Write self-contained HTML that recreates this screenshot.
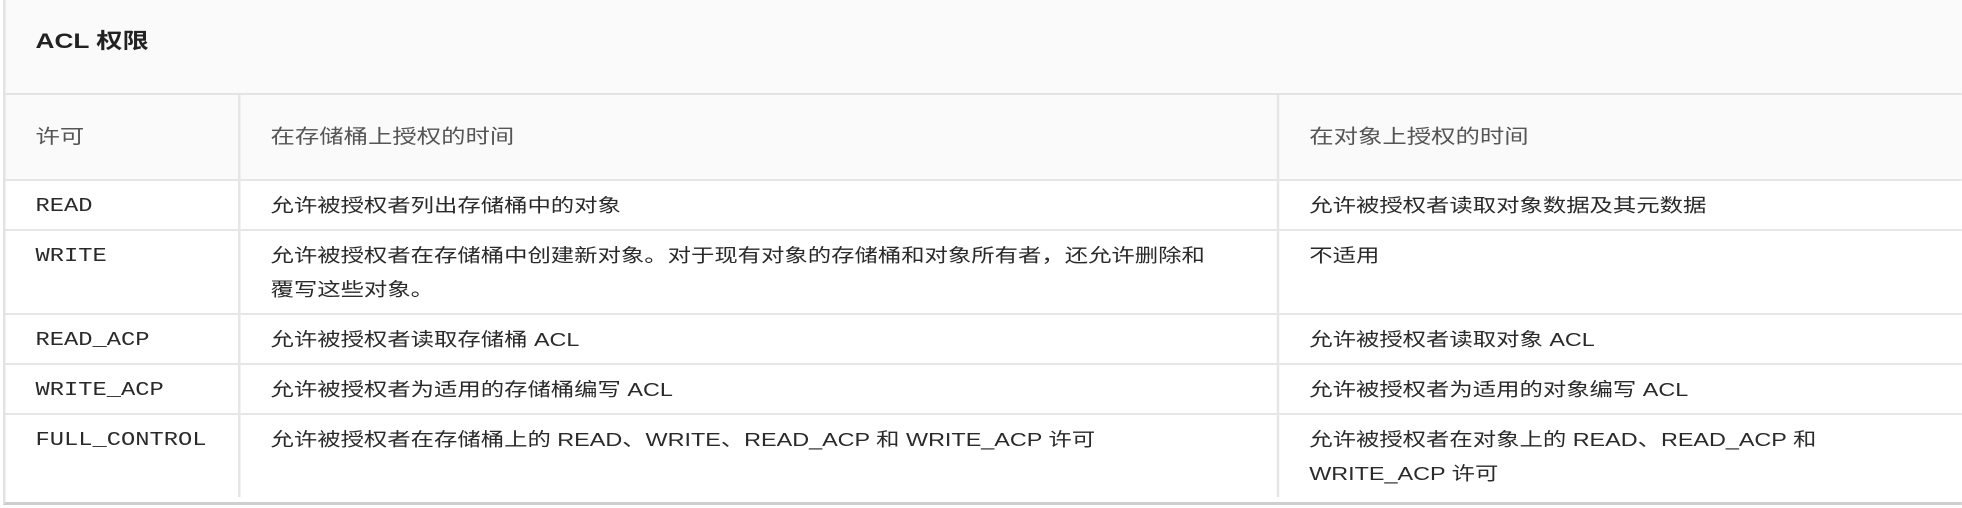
<!DOCTYPE html>
<html><head><meta charset="utf-8"><style>
body{margin:0;background:#fff;width:1962px;height:508px;overflow:hidden;font-family:"Liberation Sans","Noto Sans CJK SC",sans-serif;color:#333;}
.wrap{position:absolute;left:3px;top:0;width:1567px;height:505px;border-left:2px solid #e3e3e3;border-bottom:3px solid #cfcfcf;box-sizing:border-box;transform-origin:0 0;transform:scaleX(1.25);}
.title{height:95px;background:#fafafa;border-bottom:2px solid #e3e3e3;box-sizing:border-box;font-weight:bold;font-size:21px;color:#222;padding-left:24px;line-height:84px;}
table{border-collapse:collapse;width:100%;font-size:18.7px;}
td{border-bottom:2px solid #e6e6e6;vertical-align:top;padding:0 0 0 24px;line-height:34px;color:#2a2a2a;}
td+td{border-left:2px solid #e6e6e6;}
tr.h td{height:84px;line-height:84px;background:#fafafa;color:#555;padding-top:0;font-size:19.5px;}
tr.r td{padding-top:8px;padding-bottom:6px;}
.m{font-family:"Liberation Mono",monospace;font-size:19px;}
</style></head><body>
<div class="wrap">
<div class="title">ACL 权限</div>
<table>
<colgroup><col style="width:187px"><col style="width:831px"><col></colgroup>
<tr class="h"><td>许可</td><td>在存储桶上授权的时间</td><td>在对象上授权的时间</td></tr>
<tr class="r"><td class="m">READ</td><td>允许被授权者列出存储桶中的对象</td><td>允许被授权者读取对象数据及其元数据</td></tr>
<tr class="r"><td class="m">WRITE</td><td>允许被授权者在存储桶中创建新对象。对于现有对象的存储桶和对象所有者，还允许删除和<br>覆写这些对象。</td><td>不适用</td></tr>
<tr class="r"><td class="m">READ_ACP</td><td>允许被授权者读取存储桶 ACL</td><td>允许被授权者读取对象 ACL</td></tr>
<tr class="r"><td class="m">WRITE_ACP</td><td>允许被授权者为适用的存储桶编写 ACL</td><td>允许被授权者为适用的对象编写 ACL</td></tr>
<tr class="r"><td class="m" style="border-bottom:none">FULL_CONTROL</td><td style="border-bottom:none">允许被授权者在存储桶上的 READ、WRITE、READ_ACP 和 WRITE_ACP 许可</td><td style="border-bottom:none">允许被授权者在对象上的 READ、READ_ACP 和<br>WRITE_ACP 许可</td></tr>
</table>
</div>
</body></html>
